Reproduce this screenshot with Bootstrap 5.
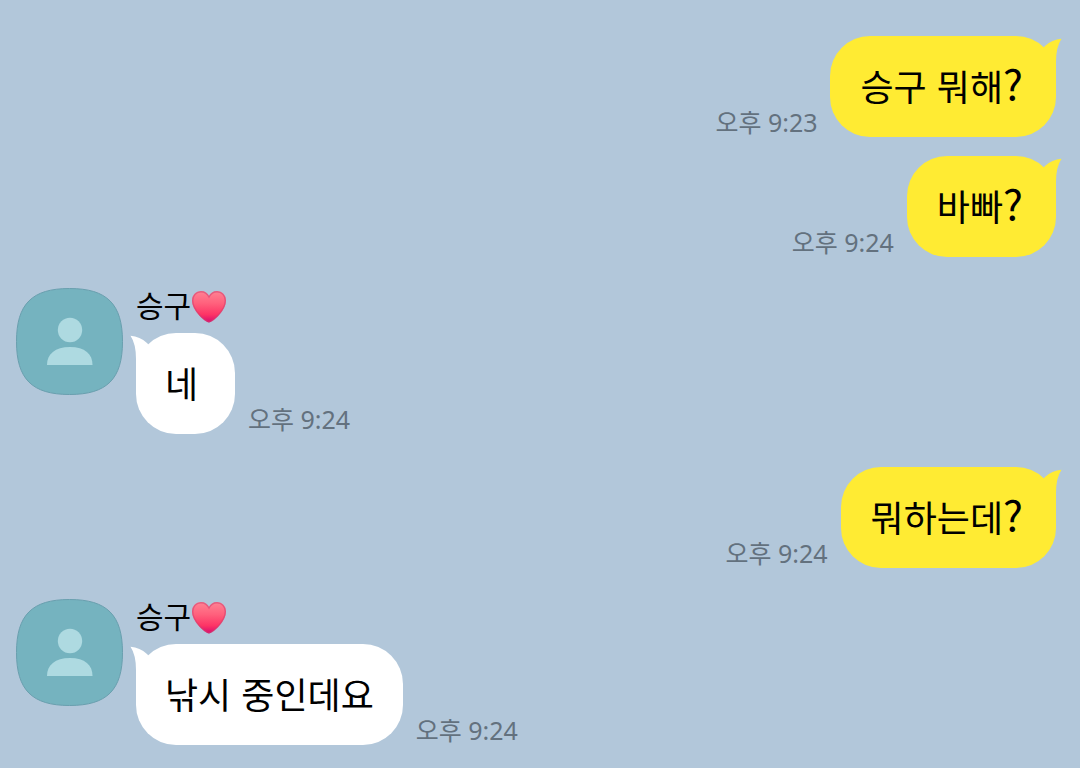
<!DOCTYPE html>
<html lang="ko">
<head>
<meta charset="utf-8">
<meta name="viewport" content="width=device-width, initial-scale=1">
<title>승구</title>
<link rel="stylesheet" href="https://cdn.jsdelivr.net/npm/bootstrap@5.3.0/dist/css/bootstrap.min.css">
<style>
body { background: #b2c7da; color: #000; font-family: "Noto Sans CJK KR", sans-serif; }
.chat { padding: 36px 24px 23px 16px; }
.message { gap: 13px; }
.bubble { position: relative; min-width: 99px; min-height: 101px; padding: 21px 29px 23px 29px; border-radius: 40px; font-size: 36px; line-height: 57px; }
.mine { background: #ffeb33; padding: 21px 33px 23px 30px; }
.theirs { background: #fff; }
.query { font-size: 42px; line-height: 1; }
.tail { position: absolute; top: 2px; width: 26px; height: 46px; }
.mine .tail { right: -6px; fill: #ffeb33; }
.theirs .tail { left: -6px; fill: #fff; transform: scaleX(-1); }
.stamp { font-family: "Noto Sans", "Noto Sans CJK KR", sans-serif; font-size: 25px; line-height: 30px; color: #63717e; }
.avatar { width: 107px; height: 107px; }
.who { font-size: 30px; line-height: 32px; height: 45px; }
.heart { width: 36px; height: 36px; }
.gap-s { margin-top: 19px; }
.gap-m { margin-top: 31px; }
.gap-l { margin-top: 33px; }
</style>
</head>
<body>
<svg class="position-absolute" width="0" height="0" aria-hidden="true">
  <defs>
    <linearGradient id="pink" x1="0" y1="0" x2="0" y2="1"><stop offset="0" stop-color="#ff8394"/><stop offset=".4" stop-color="#ff607c"/><stop offset=".75" stop-color="#fd3465"/><stop offset="1" stop-color="#d8086f"/></linearGradient>
    <symbol id="heart" viewBox="0 0 36 36">
      <path d="M18 34.500C15 34.500 1 23 1 12.500C1 7 5 3 10 3C14 3 16.500 5 18 8C19.500 5 22 3 26 3C31 3 35 7 35 12.500C35 23 21 34.500 18 34.500Z" fill="url(#pink)"/>
      <path d="M18 33.800C15 33.800 1.700 23 1.700 12.500C1.700 7.300 5.300 3.700 10 3.700C14 3.700 16.500 6 18 9C19.500 6 22 3.700 26 3.700C30.700 3.700 34.300 7.300 34.300 12.500C34.300 23 21 33.800 18 33.800Z" fill="none" stroke="#d0406f" stroke-opacity=".55" stroke-width="1.400"/>
    </symbol>
    <symbol id="person" viewBox="0 0 107 107">
      <path d="M53.500 .5C91 .5 106.500 16 106.500 53.500S91 106.500 53.500 106.500S.5 91 .5 53.500S16 .5 53.500 .5Z" fill="#75b3bf" stroke="#699fae"/>
      <circle cx="54" cy="42" r="12.200" fill="#aedae1"/>
      <path d="M31 77C31 66 39 59 54 59S76.500 66 76.500 77Z" fill="#aedae1"/>
    </symbol>
    <symbol id="tail" viewBox="0 0 26 46">
      <path d="M0 18L9 8Q16 1.500 25.500 .8Q20 9 20 24V46H0Z"/>
    </symbol>
  </defs>
</svg>
<main class="chat d-flex flex-column">
  <div class="message d-flex justify-content-end align-items-end">
    <time class="stamp">오후 9:23</time>
    <div class="bubble mine"><svg class="tail" aria-hidden="true"><use href="#tail"/></svg>승구 뭐해<span class="query">?</span></div>
  </div>
  <div class="message d-flex justify-content-end align-items-end gap-s">
    <time class="stamp">오후 9:24</time>
    <div class="bubble mine"><svg class="tail" aria-hidden="true"><use href="#tail"/></svg>바빠<span class="query">?</span></div>
  </div>
  <div class="message d-flex align-items-start gap-m">
    <svg class="avatar flex-shrink-0" aria-hidden="true"><use href="#person"/></svg>
    <div>
      <div class="who d-flex">승구<svg class="heart" role="img" aria-label="하트"><use href="#heart"/></svg></div>
      <div class="message d-flex align-items-end">
        <div class="bubble theirs"><svg class="tail" aria-hidden="true"><use href="#tail"/></svg>네</div>
        <time class="stamp">오후 9:24</time>
      </div>
    </div>
  </div>
  <div class="message d-flex justify-content-end align-items-end gap-l">
    <time class="stamp">오후 9:24</time>
    <div class="bubble mine"><svg class="tail" aria-hidden="true"><use href="#tail"/></svg>뭐하는데<span class="query">?</span></div>
  </div>
  <div class="message d-flex align-items-start gap-m">
    <svg class="avatar flex-shrink-0" aria-hidden="true"><use href="#person"/></svg>
    <div>
      <div class="who d-flex">승구<svg class="heart" role="img" aria-label="하트"><use href="#heart"/></svg></div>
      <div class="message d-flex align-items-end">
        <div class="bubble theirs"><svg class="tail" aria-hidden="true"><use href="#tail"/></svg>낚시 중인데요</div>
        <time class="stamp">오후 9:24</time>
      </div>
    </div>
  </div>
</main>
<script src="https://cdn.jsdelivr.net/npm/bootstrap@5.3.0/dist/js/bootstrap.bundle.min.js"></script>
</body>
</html>
